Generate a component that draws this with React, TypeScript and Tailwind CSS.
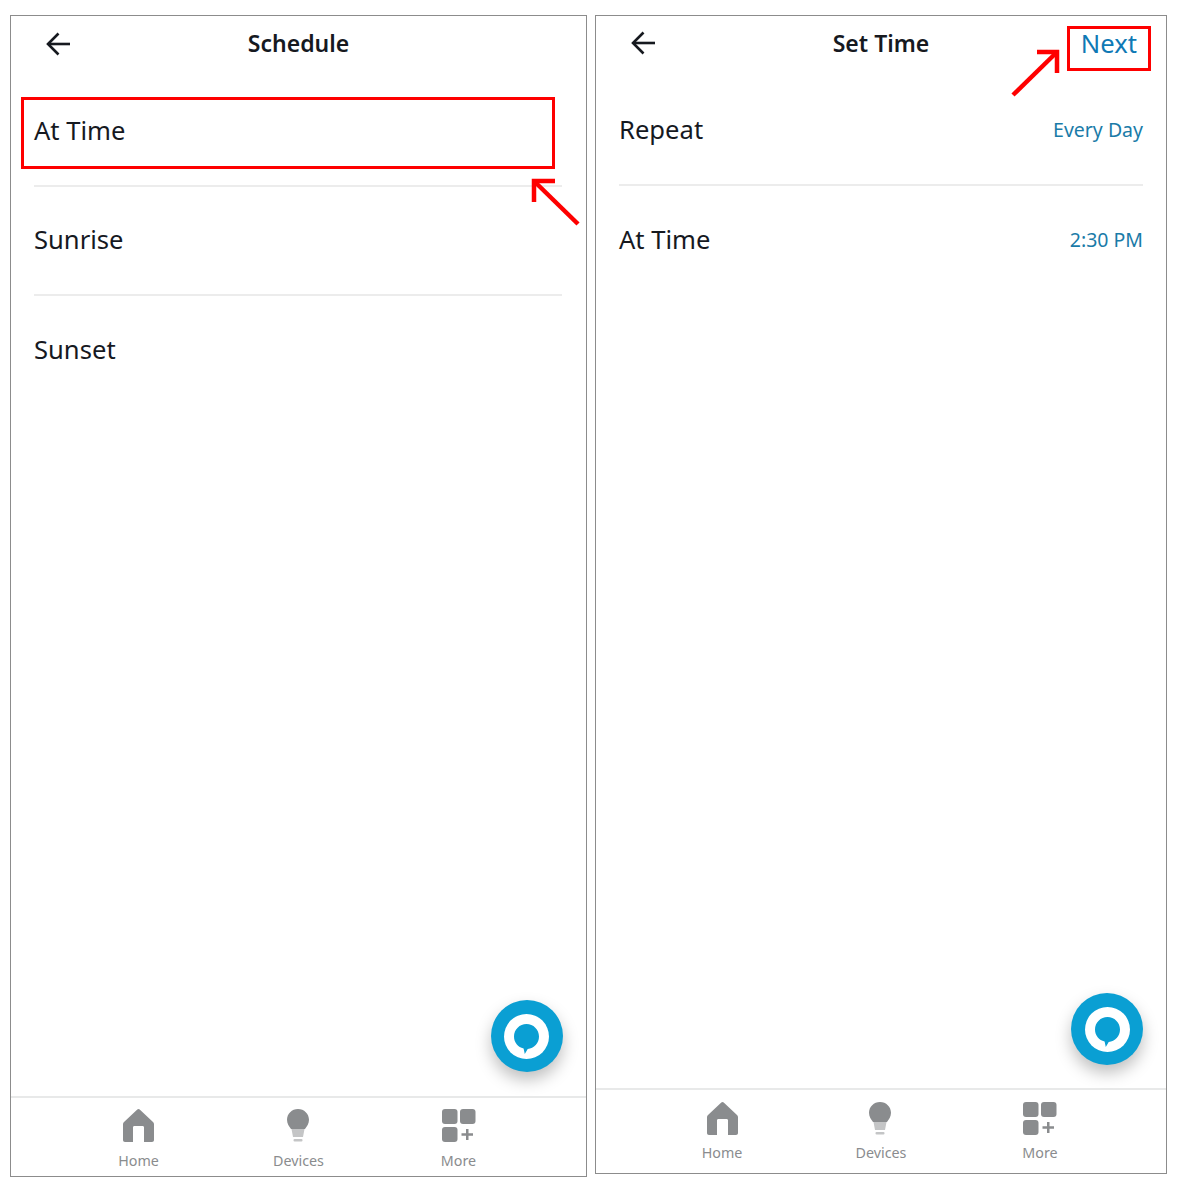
import type { ReactNode } from "react"

const font = { fontFamily: '"Noto Sans", "Open Sans", sans-serif' }

function BackArrow() {
  return (
    <svg className="mt-[1px] ml-[2px]" width="26" height="24" viewBox="0 0 26 24" fill="none" stroke="#16191f" strokeWidth="2.6">
      <path d="M25 12H3" />
      <path d="M13.5 1.500L3 12l10.500 10.500" />
    </svg>
  )
}

function HomeIcon() {
  return (
    <svg width="31" height="33" viewBox="0 0 31 33">
      <path
        fill="#8a8c8e"
        d="M14.300.6c.7-.7 1.700-.7 2.400 0L30 13c.7.6 1 1.400 1 2.300V31c0 1.200-.8 2-2 2h-8V18.500c0-1-.6-1.500-1.500-1.500h-8c-.9 0-1.500.5-1.500 1.500V33H2c-1.200 0-2-.8-2-2V15.300c0-.9.3-1.700 1-2.300L14.300.6z"
      />
    </svg>
  )
}

function BulbIcon() {
  return (
    <svg className="-ml-[2px]" width="22" height="33" viewBox="0 0 22 33">
      <path fill="#8a8c8e" d="M11 0c6.100 0 11 4.900 11 10.800 0 4.200-2.200 6.800-4 9.200H4c-1.800-2.400-4-5-4-9.200C0 4.900 4.900 0 11 0z" />
      <path fill="#c4c5c6" d="M4.500 20h13l-1.500 8H6z" />
      <rect x="6.500" y="30" width="9" height="2.500" rx="1" fill="#c4c5c6" />
    </svg>
  )
}

function MoreIcon() {
  return (
    <svg width="34" height="33" viewBox="0 0 34 33" fill="#8a8c8e">
      <rect x="0" y="0" width="15.500" height="15" rx="3" />
      <rect x="18" y="0" width="15.500" height="15" rx="3" />
      <rect x="0" y="18" width="15.500" height="15" rx="3" />
      <path d="M24 20h2.500v4.200H31v2.500h-4.500V31H24v-4.300h-4.500v-2.500H24z" />
    </svg>
  )
}

function AlexaButton({ className }: { className: string }) {
  return (
    <div
      className={`absolute flex h-[72px] w-[72px] items-center justify-center rounded-full bg-[#0a9fd3] shadow-[0_8px_16px_rgba(0,0,0,0.25)] ${className}`}
    >
      <svg width="45" height="45" viewBox="0 0 45 45">
        <circle cx="22.500" cy="22.500" r="22.500" fill="#fff" />
        <path
          fill="#0a9fd3"
          d="M22.500 10c6.800 0 12.500 5.500 12.500 12.500 0 6.600-5 11.800-11.300 12.400L20.800 40l-1.200-5.500C14 33.200 10 28.300 10 22.500 10 15.500 15.700 10 22.500 10z"
        />
      </svg>
    </div>
  )
}

function NavItem({ icon, label, className, gap }: { icon: ReactNode; label: string; className: string; gap: string }) {
  return (
    <div className={`flex flex-col items-center ${className}`}>
      <div className="flex h-[33px] items-center">{icon}</div>
      <span className={`text-[14.300px] leading-[20px] text-[#8a8c8e] ${gap}`}>{label}</span>
    </div>
  )
}

function BottomNav({ tall }: { tall?: boolean }) {
  const box = tall ? "h-[85px] pt-[12px]" : "h-[80px] pt-[11px]"
  const item = tall ? "w-[159px]" : "w-[160px]"
  const gap = tall ? "mt-[8px]" : "mt-[9px]"
  return (
    <div className={`flex justify-center border-t-2 border-[#e8e9e9] ${box}`}>
      <NavItem className={item} gap={gap} icon={<HomeIcon />} label="Home" />
      <NavItem className={item} gap={gap} icon={<BulbIcon />} label="Devices" />
      <NavItem className={item} gap={gap} icon={<MoreIcon />} label="More" />
    </div>
  )
}

function Row({ label, value, divider }: { label: string; value?: string; divider?: boolean }) {
  return (
    <div
      className={`flex h-[109px] items-center justify-between pb-[1px] ${divider ? "border-b-2 border-[#ececec]" : ""}`}
    >
      <span className="text-[25.600px] leading-[32px] text-[#16191f]">{label}</span>
      {value && <span className="text-[19.500px] leading-[26px] text-[#1a7ba8]">{value}</span>}
    </div>
  )
}

function Header({ title, action, height }: { title: string; action?: string; height: string }) {
  return (
    <div className={`grid grid-cols-[1fr_auto_1fr] items-center px-[32px] pb-[8px] ${height}`}>
      <BackArrow />
      <span className="text-[23px] leading-[30px] font-semibold text-[#16191f]">{title}</span>
      <div className="-mr-[3px] mt-[2px] text-right">
        {action && <span className="text-[25.600px] leading-[32px] text-[#0f79b5]">{action}</span>}
      </div>
    </div>
  )
}

export default function App() {
  return (
    <div className="flex h-[1203px] w-[1190px] items-start gap-[8px] bg-white pt-[15px] pl-[10px]" style={font}>
      {/* Schedule */}
      <div className="relative flex h-[1162px] w-[577px] flex-col border border-[#8c8c8c]">
        <Header title="Schedule" height="h-[62px]" />
        <div className="flex-1 pr-[24px] pl-[23px]">
          <Row label="At Time" divider />
          <Row label="Sunrise" divider />
          <Row label="Sunset" />
        </div>
        <BottomNav />
        <AlexaButton className="top-[984px] left-[479.500px]" />
        <div className="absolute top-[81px] left-[10px] h-[72px] w-[534px] border-[3px] border-[#fe0000]" />
        <svg className="absolute top-[160px] left-[518px]" width="52" height="52" viewBox="0 0 52 52" fill="none" stroke="#fe0000" strokeWidth="4.500">
          <path d="M49 48L6 6" />
          <path d="M26 5H5v21" />
        </svg>
      </div>

      {/* Set Time */}
      <div className="relative flex h-[1159px] w-[572px] flex-col border border-[#8c8c8c]">
        <Header title="Set Time" action="Next" height="h-[61px]" />
        <div className="flex-1 px-[23px]">
          <Row label="Repeat" value="Every Day" divider />
          <Row label="At Time" value="2:30 PM" />
        </div>
        <BottomNav tall />
        <AlexaButton className="top-[977px] left-[475px]" />
        <div className="absolute top-[10px] left-[471px] h-[45px] w-[84px] border-[3px] border-[#fe0000]" />
        <svg className="absolute top-[33px] left-[414px]" width="52" height="52" viewBox="0 0 52 52" fill="none" stroke="#fe0000" strokeWidth="4.500">
          <path d="M3 46L47 3" />
          <path d="M27 3h20v21" />
        </svg>
      </div>
    </div>
  )
}
